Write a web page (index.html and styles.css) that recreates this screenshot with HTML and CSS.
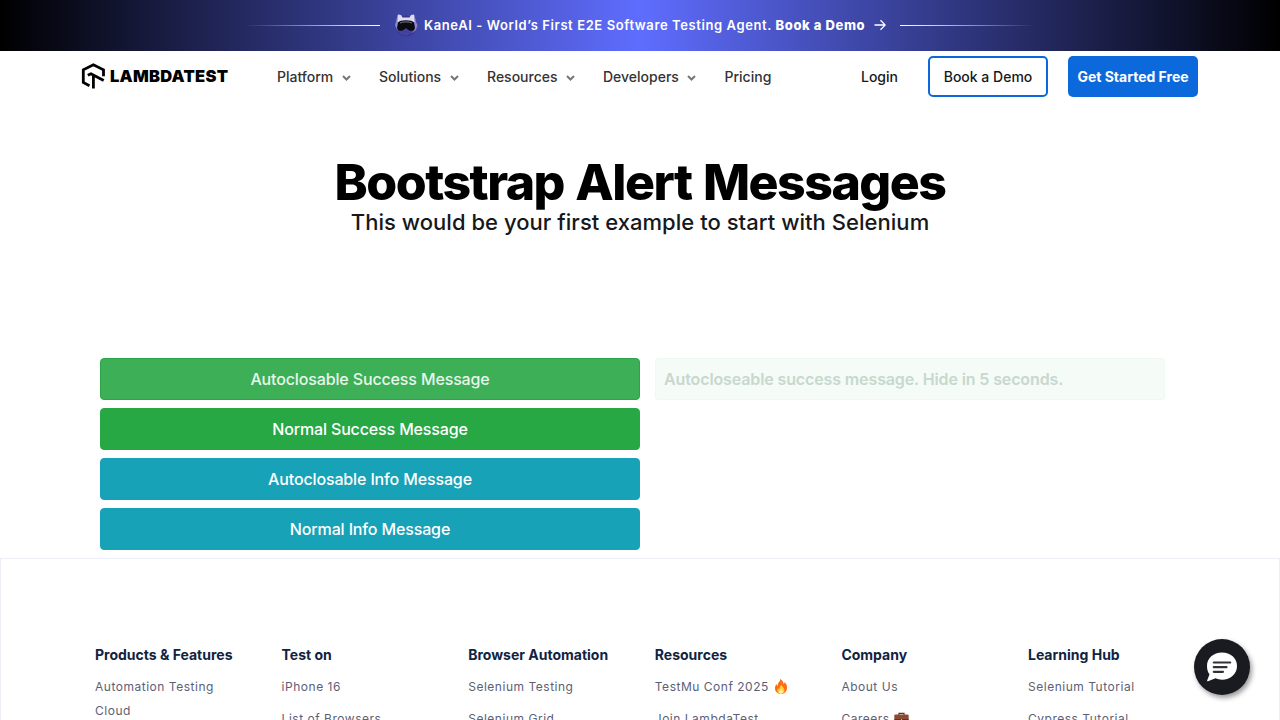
FILE: index.html
```html
<!DOCTYPE html>
<html lang="en">
<head>
<meta charset="utf-8">
<title>Bootstrap Alert Messages</title>
<link rel="stylesheet" href="styles.css">
</head>
<body>
<div class="banner">
  <span class="line line-left"></span>
  <svg class="kane" width="24" height="24" viewBox="0 0 24 24">
    <circle cx="12" cy="13" r="10.5" fill="#39358a"/>
    <path d="M2 9 3.500 2l3.500 1 1 2h8l1-2 3.500-1L22 9l1.500 3-1.500 5-4 3H7l-4-3-2-5z" fill="#8f87cf"/>
    <path d="M3.500 9 4 1.500l3 .5 1.500 2.500h7L17 2l3-.5.5 7.500z" fill="#dedaf4"/>
    <path d="M3 16h18l-4 5-5 2-6-2z" fill="#4640a0"/>
    <path d="M4 9.500c2-3 14-3 16 0l1 5.500c-1 3.500-5.500 3.500-7 1.500l-2-1-2 1c-1.500 2-6 2-7-1.500z" fill="#0b0b12"/>
    <path d="M6 10c3-1.500 9-1.500 12 0" stroke="#77777c" fill="none"/>
  </svg>
  <span class="banner-text">KaneAI - World’s First E2E Software Testing Agent. <b>Book a Demo</b></span>
  <svg class="arrow" width="12" height="12" viewBox="0 0 12 12"><path d="M.5 6h10.500M6.500 1.200 11.200 6 6.500 10.800" fill="none" stroke="#fff" stroke-width="1.300"/></svg>
  <span class="line line-right"></span>
</div>
<header class="header">
  <a class="logo">
    <svg width="25" height="26" viewBox="0 0 25 26"><path d="M8.500 22.800 2.300 19.500V6.800L12.400 1.800 22.500 6.800V13.300M6.800 12.300 10 10.700 22.700 17.400M12.400 12V25.500" fill="none" stroke="#000" stroke-width="2.800"/></svg>
    <span class="logo-text">LAMBDATEST</span>
  </a>
  <nav class="nav">
    <a class="w1">Platform<svg class="chev" viewBox="0 0 9 6"><path d="M1 1l3.500 3.500L8 1"/></svg></a>
    <a class="w2">Solutions<svg class="chev" viewBox="0 0 9 6"><path d="M1 1l3.500 3.500L8 1"/></svg></a>
    <a class="w3">Resources<svg class="chev" viewBox="0 0 9 6"><path d="M1 1l3.500 3.500L8 1"/></svg></a>
    <a class="w4">Developers<svg class="chev" viewBox="0 0 9 6"><path d="M1 1l3.500 3.500L8 1"/></svg></a>
    <a>Pricing</a>
  </nav>
  <div class="actions">
    <a class="login">Login</a>
    <a class="demo">Book a Demo</a>
    <a class="start">Get Started Free</a>
  </div>
</header>
<section class="hero">
  <h1>Bootstrap Alert Messages</h1>
  <p>This would be your first example to start with Selenium</p>
</section>
<main class="content">
  <div class="buttons">
    <button class="btn success disabled">Autoclosable Success Message</button>
    <button class="btn success">Normal Success Message</button>
    <button class="btn info">Autoclosable Info Message</button>
    <button class="btn info">Normal Info Message</button>
  </div>
  <div class="alert">Autocloseable success message. Hide in 5 seconds.</div>
</main>
<footer class="footer">
  <div class="col"><h2>Products &amp; Features</h2><a>Automation Testing Cloud</a></div>
  <div class="col"><h2>Test on</h2><a>iPhone 16</a><a>List of Browsers</a></div>
  <div class="col"><h2>Browser Automation</h2><a>Selenium Testing</a><a>Selenium Grid</a></div>
  <div class="col"><h2>Resources</h2>
    <a>TestMu Conf 2025 <svg class="emoji fire" width="14" height="15" viewBox="0 0 14 15"><path d="M6 0c2.500 1 3.500 3 3.500 5 .8-.4 1-1.200 1-2 2 2 2.800 4 2.500 6.500C12.600 13 10 15 7 15S1.200 13 1 9.800C.900 7.800 1.700 6 2.500 5c.2 1 .6 1.600 1.200 1.900C3.500 5 4.500 3.500 5.500 2.500 6 1.800 6.200.8 6 0z" fill="#ff6b12"/><path d="M7.500 5.500c.3 2 3 3.500 3 6 0 2-1.500 3.300-3.500 3.300S3.300 13.500 3.300 11.500c0-1 .3-1.800.8-2.500.4.800.8 1 1.200 1C5 8.500 6.500 7.500 7.500 5.500z" fill="#ffcc35"/><path d="M7 10c1 1 2 1.700 2 3 0 1-1 1.700-2 1.700s-2-.7-2-1.700 1.200-1.500 2-3z" fill="#fff09a"/></svg></a><a>Join LambdaTest</a></div>
  <div class="col"><h2>Company</h2><a>About Us</a>
    <a>Careers <svg class="emoji" width="15" height="15" viewBox="0 0 15 15"><path d="M5 4V2.300h5V4" fill="none" stroke="#633225" stroke-width="1.200"/><rect x=".3" y="3.500" width="14.400" height="11" rx="1.200" fill="#8b4a35"/><path d="M.5 8.500h14" stroke="#633225"/><path d="M7 8h1v2H7z" fill="#ddb457"/></svg></a></div>
  <div class="col"><h2>Learning Hub</h2><a>Selenium Tutorial</a><a>Cypress Tutorial</a></div>
</footer>
<div class="chat"><svg width="32" height="30" viewBox="0 0 32 30"><path d="M16 .5C24.500.5 31 6 31 14s-6.500 13.700-15 13.700c-2.400 0-4.600-.5-6.500-1.400L2 29.200c-1 .2-1-.5-.7-1.200l2.200-5.500C1.700 20 1 17.300 1 14 1 6 7.500.5 16 .5z" fill="#fff"/><path d="M7.800 10.500h16.400M7.800 15.200h12.700M7.800 19.800h9.200" stroke="#323337" stroke-width="2.200" stroke-linecap="round"/></svg></div>
</body>
</html>
```
FILE: styles.css
```css
* { box-sizing: border-box; }
body { margin: 0; height: 720px; overflow: hidden; background: #fff; font-family: Inter, sans-serif; color: #16181b; }
.banner { height: 51px; display: flex; align-items: center; padding-left: 245px; color: #fff; background: linear-gradient(90deg, #000 0%, #5f6dff 50%, #000 100%); }
.line { width: 135px; height: 1px; flex: none; }
.line-left { background: linear-gradient(270deg, #fff, rgba(255,255,255,0)); }
.line-right { background: linear-gradient(90deg, #fff, rgba(255,255,255,0)); margin-left: 13px; }
.kane { margin: 0 0 1px 14px; flex: none; }
.banner-text { width: 441px; margin: 0 0 2px 6px; flex: none; font-size: 13px; font-weight: 600; letter-spacing: .6px; white-space: nowrap; }
.banner-text b { font-weight: 800; }
.arrow { margin-left: 9px; margin-right: 1px; margin-bottom: 1px; flex: none; }
.header { height: 51px; display: flex; align-items: center; padding: 0 82px 0 81px; font-size: 14px; font-weight: 500; }
.logo { display: flex; align-items: center; width: 196px; flex: none; color: #000; padding-bottom: 2px; }
.logo-text { margin-left: 4px; font-size: 16.500px; font-weight: 900; letter-spacing: .25px; }
.nav { display: flex; color: #333; }
.nav a { display: flex; align-items: center; }
.w1 { width: 102px; }
.w2 { width: 108px; }
.w3 { width: 116px; }
.w4 { width: 121.500px; }
.chev { width: 9px; height: 6px; margin: 2px 0 0 8.500px; fill: none; stroke: #777; stroke-width: 2; }
.actions { display: flex; align-items: center; margin-left: auto; }
.login { margin-right: 30px; }
.demo, .start { height: 41px; display: flex; align-items: center; justify-content: center; border-radius: 5px; }
.demo { width: 120px; border: 2px solid #0b69dc; margin-right: 20px; }
.start { width: 130px; background: #0b69dc; color: #fff; font-weight: 700; }
.hero { height: 256px; padding-top: 54px; text-align: center; }
.hero h1 { margin: 0; font-size: 50px; line-height: 53px; font-weight: 800; color: #000; letter-spacing: -1.520px; word-spacing: 2px; }
.hero p { margin: 0; font-size: 22px; line-height: 26px; font-weight: 500; letter-spacing: .04px; }
.content { height: 200px; display: flex; align-items: flex-start; gap: 15px; padding-left: 100px; }
.buttons { width: 540px; display: flex; flex-direction: column; gap: 8px; }
.btn { height: 42px; border: 1px solid; border-radius: 4px; color: #fff; font: 500 16px Inter, sans-serif; letter-spacing: -.14px; padding: 0; }
.success { background: #28a745; border-color: #28a745; }
.info { background: #17a2b8; border-color: #17a2b8; }
.disabled { background: #3daf57; border-color: #2ba548; color: #e8f6eb; }
.alert { width: 510px; height: 42px; padding-left: 8px; border: 1px solid #f0f8f2; border-radius: 3px; background: #f5fbf7; color: #c7d8ce; font-size: 16px; line-height: 40px; font-weight: 600; letter-spacing: -.12px; }
.footer { height: 170px; border: 1px solid #ebeefa; padding: 86px 0 0 94px; display: grid; grid-template-columns: repeat(6, 186.600px); }
.footer h2 { margin: 0; font-size: 14px; line-height: 20px; font-weight: 700; color: #10233f; white-space: nowrap; }
.col a { display: block; margin-top: 8px; width: 150px; font-size: 12px; line-height: 24px; letter-spacing: .52px; color: #5d6075; }
.col h2 + a { margin-top: 10px; }
.emoji { vertical-align: -3px; }
.fire { margin-left: 1px; }
.chat { position: absolute; left: 1194px; top: 639px; width: 56px; height: 56px; border-radius: 50%; background: #191b20; display: flex; align-items: center; justify-content: center; box-shadow: 2px 3px 5px rgba(0,0,0,.4); }
```
